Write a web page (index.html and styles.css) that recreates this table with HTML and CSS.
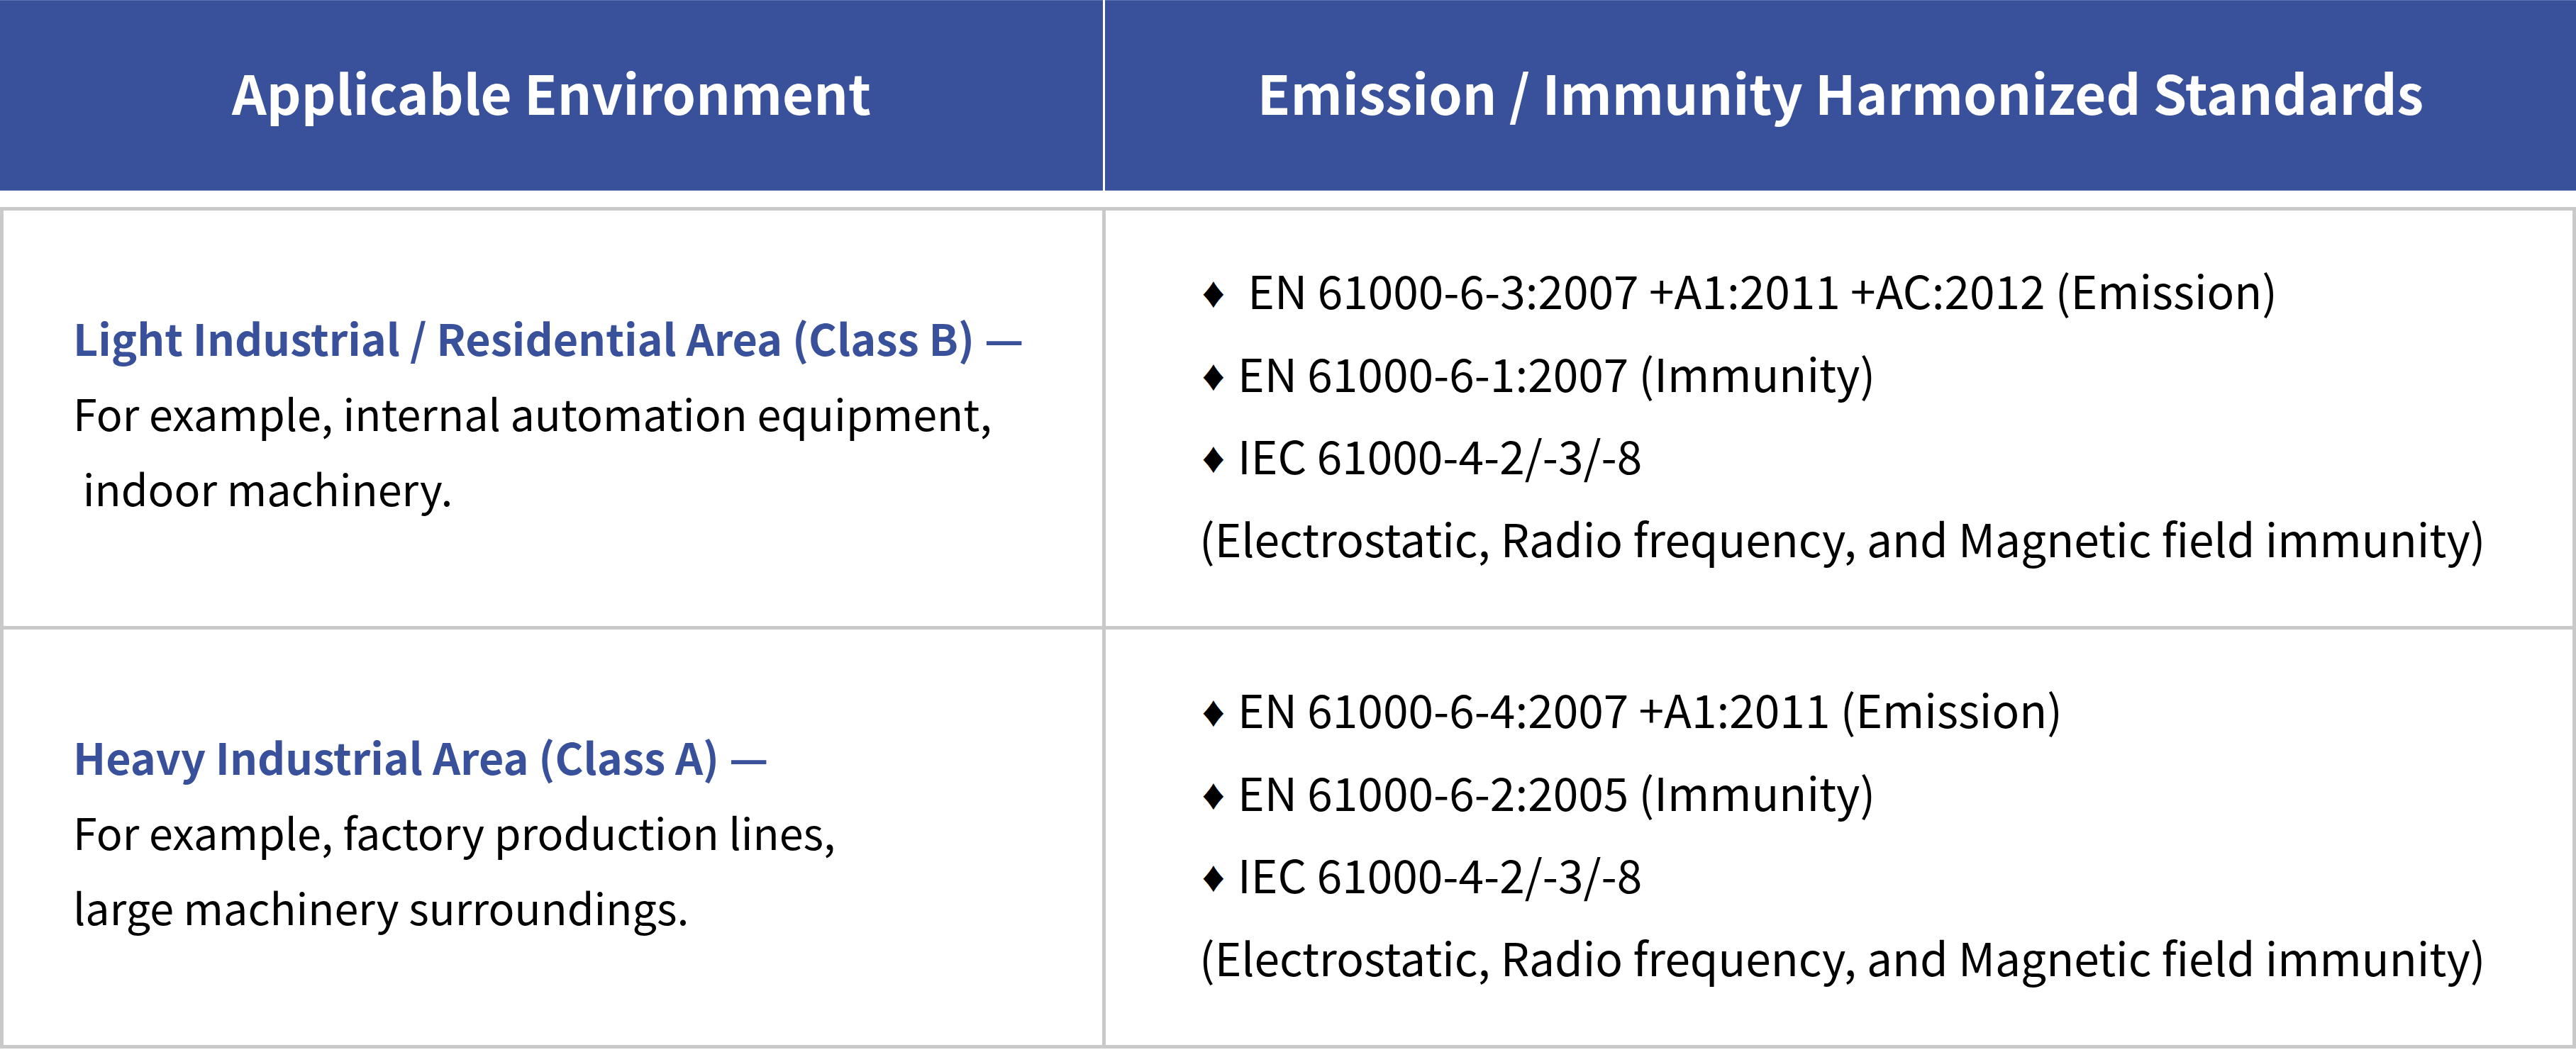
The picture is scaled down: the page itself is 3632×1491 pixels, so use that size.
FILE: index.html
```html
<!DOCTYPE html>
<html lang="en">
<head>
<meta charset="utf-8">
<title>EMC Standards</title>
<link rel="stylesheet" href="styles.css">
</head>
<body>
<div class="table">
  <div class="head">
    <div class="head-cell">Applicable Environment</div>
    <div class="head-cell">Emission / Immunity Harmonized Standards</div>
  </div>
  <div class="body">
    <div class="cell env">
      <p class="env-title">Light Industrial / Residential Area (Class B) —</p>
      <p class="env-desc">For example, internal automation equipment,<br>&nbsp;indoor machinery.</p>
    </div>
    <div class="cell std">
      <p><span class="dia">♦</span>&nbsp; EN 61000-6-3:2007 +A1:2011 +AC:2012 (Emission)</p>
      <p><span class="dia">♦</span> EN 61000-6-1:2007 (Immunity)</p>
      <p><span class="dia">♦</span> IEC 61000-4-2/-3/-8</p>
      <p>(Electrostatic, Radio frequency, and Magnetic field immunity)</p>
    </div>
    <div class="cell env">
      <p class="env-title">Heavy Industrial Area (Class A) —</p>
      <p class="env-desc">For example, factory production lines,<br>large machinery surroundings.</p>
    </div>
    <div class="cell std">
      <p><span class="dia">♦</span> EN 61000-6-4:2007 +A1:2011 (Emission)</p>
      <p><span class="dia">♦</span> EN 61000-6-2:2005 (Immunity)</p>
      <p><span class="dia">♦</span> IEC 61000-4-2/-3/-8</p>
      <p>(Electrostatic, Radio frequency, and Magnetic field immunity)</p>
    </div>
  </div>
</div>
</body>
</html>
```
FILE: styles.css
```css
html, body {
  margin: 0;
  padding: 0;
  background: #ffffff;
}
body {
  font-family: "Noto Sans CJK SC", "Noto Sans", sans-serif;
  color: #000000;
}
.table {
  width: 3632px;
}
.head {
  display: grid;
  grid-template-columns: 1555px 1fr;
  column-gap: 3px;
  background: #ffffff;
  height: 269px;
}
.head-cell {
  background: #39509b;
  border-top: 1px solid #5d72b4;
  border-bottom: 1px solid #5d72b4;
  color: #ffffff;
  font-weight: 700;
  font-size: 76px;
  padding-bottom: 12px;
  display: flex;
  align-items: center;
  justify-content: center;
}
.body {
  margin-top: 23px;
  display: grid;
  grid-template-columns: 1549px 1fr;
  grid-template-rows: 586px 586px;
  gap: 5px;
  padding: 5px;
  background: #c9c9c9;
}
.cell {
  background: #ffffff;
  display: flex;
  flex-direction: column;
  justify-content: center;
}
.cell p {
  margin: 0;
}
.env {
  padding-left: 98px;
  padding-bottom: 16px;
}
.env-title {
  color: #39509b;
  font-weight: 700;
  font-size: 61px;
  line-height: 106px;
  margin-bottom: 8px;
}
.env-desc {
  font-size: 61px;
  line-height: 106px;
}
.std {
  padding-left: 132px;
  padding-bottom: 14px;
  font-size: 64px;
  line-height: 116.5px;
}
.dia {
  font-size: 0.62em;
  line-height: 1;
  vertical-align: 0.12em;
}
```
